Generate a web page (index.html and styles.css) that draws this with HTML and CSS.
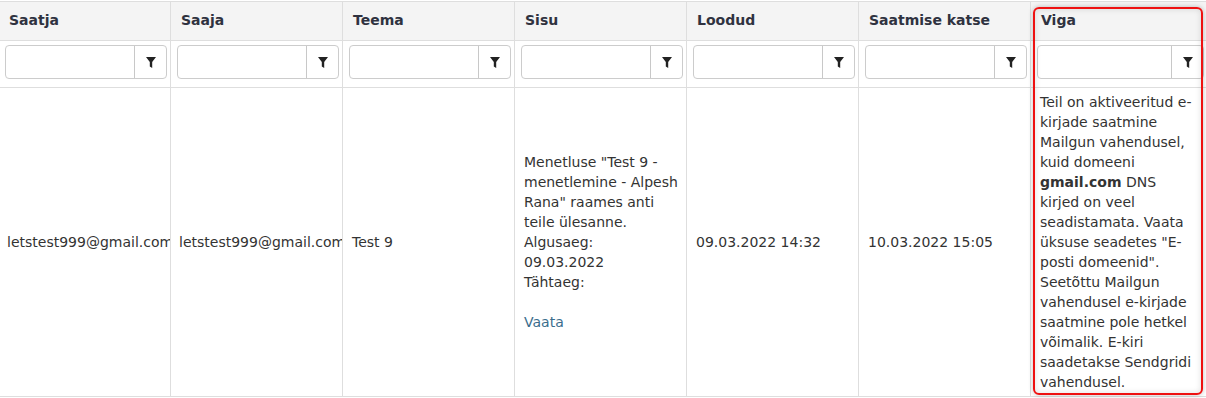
FILE: index.html
```html
<!DOCTYPE html>
<html lang="et">
<head>
    <meta charset="UTF-8">
    <title>E-kirjade logi</title>
    <link rel="stylesheet" href="styles.css">
</head>
<body>
    <div class="grid-wrap">
        <table class="mail-grid">
            <colgroup>
                <col class="col-first">
                <col><col><col><col><col>
                <col class="col-last">
            </colgroup>
            <thead>
                <tr class="head-row">
                    <th>Saatja</th>
                    <th>Saaja</th>
                    <th>Teema</th>
                    <th>Sisu</th>
                    <th>Loodud</th>
                    <th>Saatmise katse</th>
                    <th>Viga</th>
                </tr>
                <tr class="filter-row">
                    <td><div class="filter"><input type="text"><button type="button"><svg viewBox="0 0 10 11"><path d="M0 0H10L6.2 5V11L3.8 9.6V5Z"/></svg></button></div></td>
                    <td><div class="filter"><input type="text"><button type="button"><svg viewBox="0 0 10 11"><path d="M0 0H10L6.2 5V11L3.8 9.6V5Z"/></svg></button></div></td>
                    <td><div class="filter"><input type="text"><button type="button"><svg viewBox="0 0 10 11"><path d="M0 0H10L6.2 5V11L3.8 9.6V5Z"/></svg></button></div></td>
                    <td><div class="filter"><input type="text"><button type="button"><svg viewBox="0 0 10 11"><path d="M0 0H10L6.2 5V11L3.8 9.6V5Z"/></svg></button></div></td>
                    <td><div class="filter"><input type="text"><button type="button"><svg viewBox="0 0 10 11"><path d="M0 0H10L6.2 5V11L3.8 9.6V5Z"/></svg></button></div></td>
                    <td><div class="filter"><input type="text"><button type="button"><svg viewBox="0 0 10 11"><path d="M0 0H10L6.2 5V11L3.8 9.6V5Z"/></svg></button></div></td>
                    <td><div class="filter"><input type="text"><button type="button"><svg viewBox="0 0 10 11"><path d="M0 0H10L6.2 5V11L3.8 9.6V5Z"/></svg></button></div></td>
                </tr>
            </thead>
            <tbody>
                <tr>
                    <td class="nowrap">letstest999@gmail.com</td>
                    <td class="nowrap">letstest999@gmail.com</td>
                    <td>Test 9</td>
                    <td>Menetluse "Test 9 - menetlemine - Alpesh Rana" raames anti teile ülesanne.<br>Algusaeg:<br>09.03.2022<br>Tähtaeg: <br><br><a href="#">Vaata</a></td>
                    <td>09.03.2022 14:32</td>
                    <td>10.03.2022 15:05</td>
                    <td class="error-cell">Teil on aktiveeritud e-kirjade saatmine Mailgun vahendusel, kuid domeeni <b>gmail.com</b> DNS kirjed on veel seadistamata. Vaata üksuse seadetes "E-posti domeenid". Seetõttu Mailgun vahendusel e-kirjade saatmine pole hetkel võimalik. E-kiri saadetakse Sendgridi vahendusel.</td>
                </tr>
            </tbody>
        </table>
        <!-- highlight around the error column -->
        <div class="col-highlight"></div>
    </div>
</body>
</html>
```

FILE: styles.css
```css
body { margin: 0; padding: 0; font-family: "DejaVu Sans", Verdana, sans-serif; font-size: 14px; color: #333; background: #fff; }
.grid-wrap { position: relative; width: 1206px; height: 398px; overflow: hidden; }

.mail-grid {
    border-collapse: collapse;
    table-layout: fixed;
    width: 1209px;
    margin: 1px 0 0 -2px;
}
.mail-grid col { width: 172px; }
.mail-grid col.col-last { width: 177px; }

.mail-grid th, .mail-grid td { border: 1px solid #dedede; }

.head-row th {
    background-color: #f4f4f4;
    text-align: left;
    font-weight: bold;
    color: #2f3240;
    height: 39px;
    padding: 0 8px 2px 10px;
    box-sizing: border-box;
    white-space: nowrap;
}

.filter-row td { padding: 4px 3px 8px 6px; height: 46px; box-sizing: border-box; vertical-align: top; }
.filter { display: flex; height: 34px; border: 1px solid #ccc; border-radius: 4px; box-sizing: border-box; background: #fff; }
.filter input { flex: 1; min-width: 0; border: none; padding: 0 6px; background: transparent; font: inherit; }
.filter button {
    width: 32px;
    border: none;
    border-left: 1px solid #c8c8c8;
    background: transparent;
    display: flex;
    align-items: center;
    justify-content: center;
    padding: 0;
}
.filter svg { width: 10px; height: 11px; fill: #222; }

tbody td {
    padding: 4px 6px 4px 9px;
    line-height: 20px;
    vertical-align: middle;
    height: 309px;
    box-sizing: border-box;
}
tbody td.nowrap { white-space: nowrap; overflow: hidden; padding-left: 8px; }
tbody td.error-cell { padding-right: 10px; }
tbody a { color: #3a6d8c; text-decoration: none; }

.col-highlight {
    position: absolute;
    left: 1033px;
    top: 7px;
    width: 170px;
    height: 388px;
    box-sizing: border-box;
    border: 2px solid #ee1111;
    border-radius: 6px;
    box-shadow: 0 0 5px rgba(0, 0, 0, 0.25), inset 0 0 6px rgba(0, 0, 0, 0.12);
    pointer-events: none;
}
```
